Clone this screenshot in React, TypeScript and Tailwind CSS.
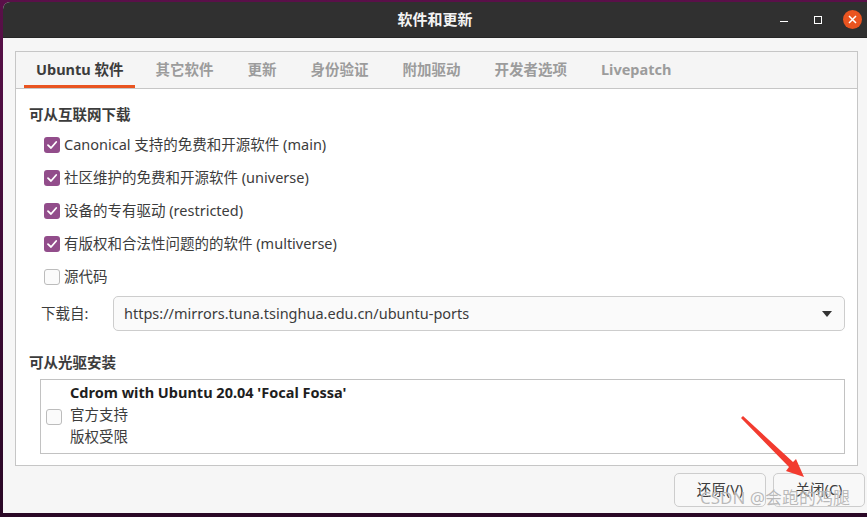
import React from "react";

const font = "font-['Noto_Sans','Noto_Sans_CJK_SC',sans-serif]";

const tabs = ["Ubuntu 软件", "其它软件", "更新", "身份验证", "附加驱动", "开发者选项", "Livepatch"];

const sources = [
  { label: "Canonical 支持的免费和开源软件 (main)", checked: true },
  { label: "社区维护的免费和开源软件 (universe)", checked: true },
  { label: "设备的专有驱动 (restricted)", checked: true },
  { label: "有版权和合法性问题的的软件 (multiverse)", checked: true },
  { label: "源代码", checked: false },
];

function CheckBox({ checked }: { checked: boolean }) {
  if (!checked) {
    return <span className="block h-[16px] w-[16px] shrink-0 rounded-[3px] border border-[#bcbcbc] bg-[#fbfbfb]" />;
  }
  return (
    <span className="flex h-[16px] w-[16px] shrink-0 items-center justify-center rounded-[3px] bg-[#924d8b]">
      <svg width="12" height="12" viewBox="0 0 12 12">
        <path d="M2 6.2 L5 9 L10.2 3" fill="none" stroke="white" strokeWidth="1.8" strokeLinecap="round" strokeLinejoin="round" />
      </svg>
    </span>
  );
}

export default function App() {
  return (
    <div className={`relative h-[517px] w-[867px] overflow-hidden bg-[linear-gradient(180deg,#5a1049_0%,#3a0b33_60%,#2a0826_100%)] pl-[3px] pt-[2px] ${font}`}>
      <div className="flex h-[511px] w-[864px] flex-col overflow-hidden rounded-tl-[7px] bg-[#f6f6f6]">
        {/* title bar */}
        <div className="relative flex h-[36px] shrink-0 items-center justify-center border-b border-[#262626] bg-[#303030]">
          <span className="text-[15px] font-bold text-[#f4f4f4]">软件和更新</span>
          <div className="absolute right-[5px] top-0 flex h-full items-center">
            <span className="mr-[26px] mt-[4px] block h-[1.5px] w-[8px] bg-white" />
            <span className="mr-[21px] block h-[8px] w-[8px] border-[1.5px] border-white" />
            <span className="flex h-[19px] w-[19px] items-center justify-center rounded-full bg-[#e95420]">
              <svg width="9" height="9" viewBox="0 0 9 9">
                <path d="M1 1 L8 8 M8 1 L1 8" stroke="white" strokeWidth="1.5" />
              </svg>
            </span>
          </div>
        </div>

        {/* notebook */}
        <div className="ml-[12px] mr-[9px] mt-[13px] flex h-[415px] flex-col border border-[#c6c6c6]">
          <div className="flex h-[37px] shrink-0 items-end border-b border-[#c6c6c6] bg-[#f5f5f5] pl-[8px]">
            {tabs.map((t, i) => (
              <div
                key={t}
                className={`flex h-full items-center text-[14.5px] font-bold ${
                  i === 0
                    ? "mr-[3px] border-b-[3px] border-[#e95420] px-[12px] pt-[3px] text-[#3c3c3c]"
                    : "px-[17px] text-[#9c9c9c]"
                }`}
              >
                {t}
              </div>
            ))}
          </div>

          <div className="flex flex-1 flex-col bg-white pl-[13px] pr-[12px] pt-[15px] text-[14.5px] text-[#3c3c3c]">
            <div className="h-[20px] font-bold leading-[20px]">可从互联网下载</div>
            <div className="mt-[4px] flex flex-col pl-[15px]">
              {sources.map((s) => (
                <div key={s.label} className="flex h-[33px] items-center gap-[4px]">
                  <CheckBox checked={s.checked} />
                  <span>{s.label}</span>
                </div>
              ))}
            </div>
            <div className="mt-[3px] flex items-center pl-[12px]">
              <span className="w-[72px]">下载自:</span>
              <div className="flex h-[35px] flex-1 items-center justify-between rounded-[5px] border border-[#cdcdcd] bg-[#fafafa] pl-[10px] pr-[12px]">
                <span>https://mirrors.tuna.tsinghua.edu.cn/ubuntu-ports</span>
                <svg width="10" height="6" viewBox="0 0 10 6">
                  <path d="M0 0 H10 L5 6 Z" fill="#333" />
                </svg>
              </div>
            </div>
            <div className="mt-[21px] h-[20px] font-bold leading-[20px]">可从光驱安装</div>
            <div className="ml-[11px] mt-[7px] flex h-[75px] items-center border border-[#c2c2c2] pl-[5px]">
              <CheckBox checked={false} />
              <div className="mb-[5px] ml-[8px] flex flex-col leading-[22px]">
                <span className="font-bold text-[#1e1e1e]">Cdrom with Ubuntu 20.04 'Focal Fossa'</span>
                <span>官方支持</span>
                <span>版权受限</span>
              </div>
            </div>
          </div>
        </div>

        {/* buttons */}
        <div className="mr-[2px] mt-[7px] flex justify-end gap-[7px]">
          {["还原(V)", "关闭(C)"].map((b) => (
            <button
              key={b}
              type="button"
              className="h-[34px] w-[92px] rounded-[5px] border border-[#cdcdcd] bg-[#f8f8f8] text-[14.5px] text-[#3c3c3c]"
            >
              {b}
            </button>
          ))}
        </div>
      </div>

      {/* annotation arrow */}
      <svg className="absolute left-[736px] top-[412px]" width="75" height="72" viewBox="736 412 75 72">
        <path d="M741 418 L743 416 L793 462 L796 459 L804 477 L786 471 L789 467 Z" fill="#f23b2f" />
      </svg>

      {/* watermark */}
      <span className="absolute left-[700px] top-[485px] text-[17px] text-[rgba(140,140,140,0.6)] [text-shadow:0_0_1px_rgba(255,255,255,0.9)]">
        CSDN @会跑的鸡腿
      </span>
    </div>
  );
}
